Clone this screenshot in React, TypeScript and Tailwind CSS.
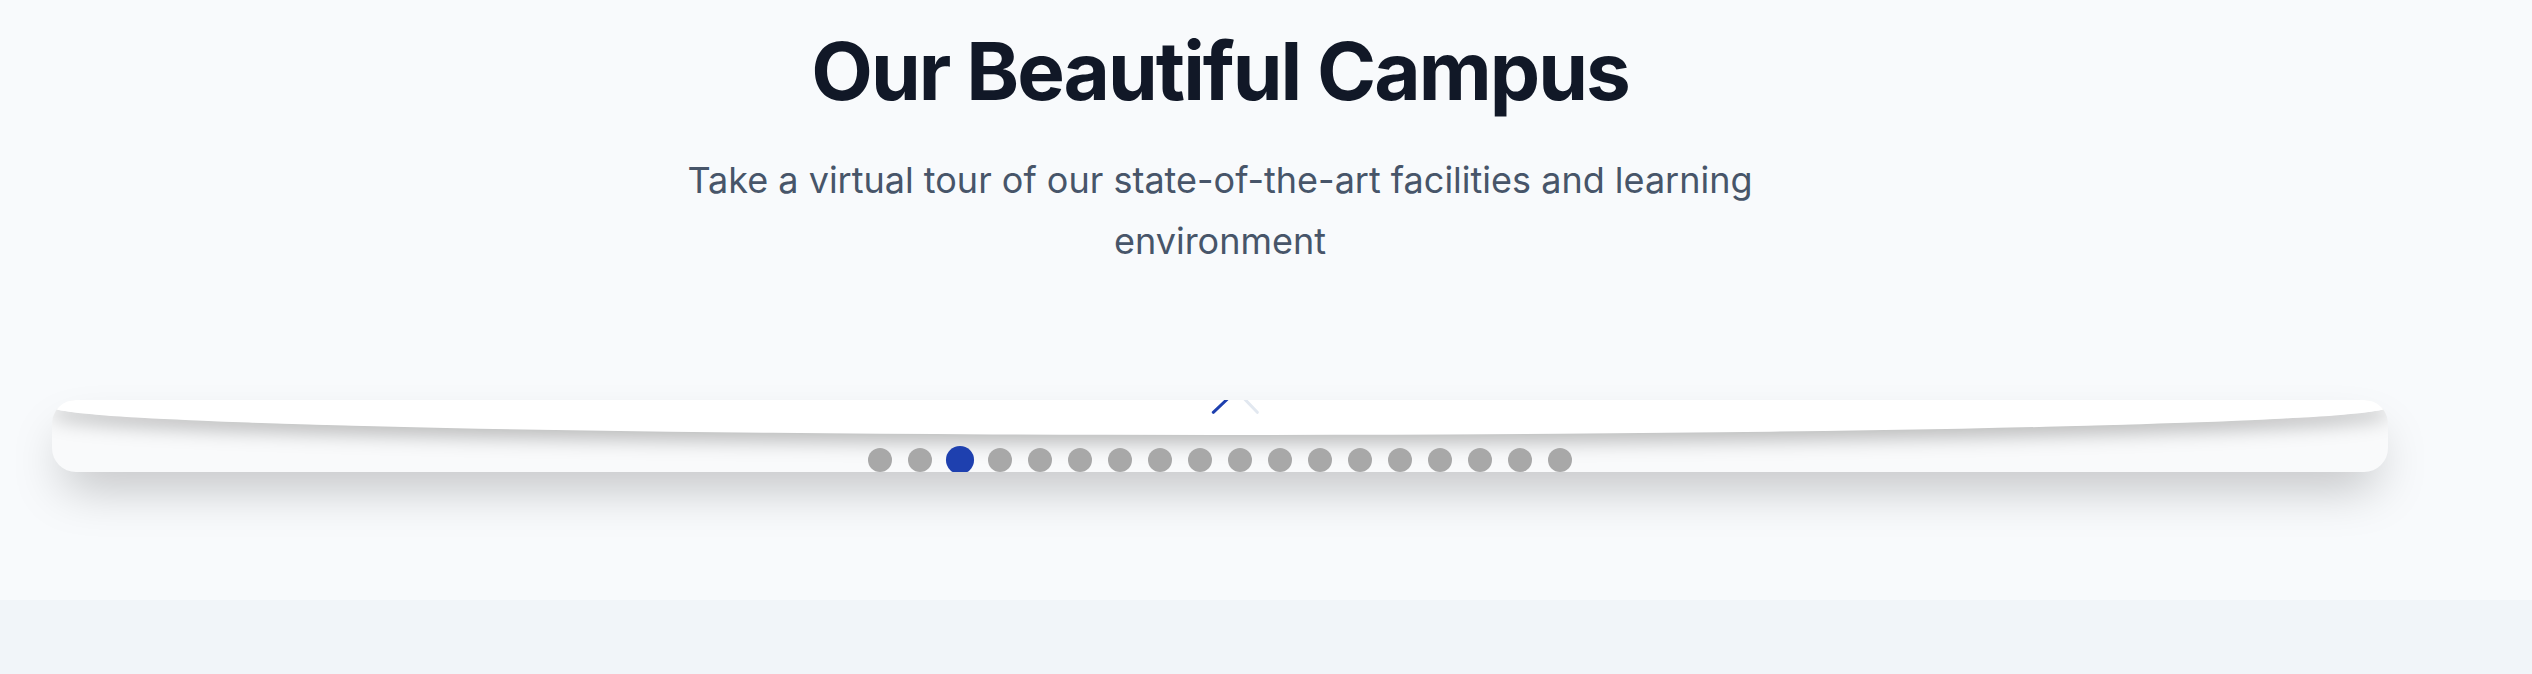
import React from "react";

export default function App() {
  const dots = Array.from({ length: 18 }, (_, i) => i);
  return (
    <div
      className="min-h-screen bg-[#f1f5f9]"
      style={{ fontFamily: "Inter, 'Noto Sans', sans-serif" }}
    >
      <section className="h-[600px] bg-[#f8fafc]">
        <div className="flex w-[2440px] flex-col items-center pt-[31px]">
          <h1 className="text-[80px] font-bold leading-none tracking-tight text-[#111827]">
            Our Beautiful Campus
          </h1>
          <p className="mt-[39px] max-w-[1100px] text-center text-[36px] leading-[61px] text-[#475569]">
            Take a virtual tour of our state-of-the-art facilities and learning environment
          </p>
          <div className="relative mt-[128px] flex h-[72px] w-[2336px] flex-col justify-between overflow-hidden rounded-3xl bg-[#f9fafb] shadow-2xl">
            <div className="h-[35px] w-full rounded-b-[50%_28px] bg-white shadow-[0_8px_20px_rgba(0,0,0,0.26)]" />
            <svg
              className="absolute left-[1156px] top-0"
              width="56"
              height="16"
              viewBox="0 0 56 16"
              fill="none"
            >
              <line x1="19.5" y1="-1" x2="5.3" y2="12.3" stroke="#1e40af" strokeWidth="3" strokeLinecap="round" />
              <line x1="36.5" y1="-1" x2="49.3" y2="12.3" stroke="#e2e8f0" strokeWidth="3" strokeLinecap="round" />
            </svg>
            <div className="mb-[-2px] flex h-7 items-center justify-center gap-4">
              {dots.map((i) => (
                <span
                  key={i}
                  className={
                    i === 2
                      ? "h-6 w-6 scale-[1.17] rounded-full bg-[#1e40af]"
                      : "h-6 w-6 rounded-full bg-[#a8a8a8]"
                  }
                />
              ))}
            </div>
          </div>
        </div>
      </section>
    </div>
  );
}
